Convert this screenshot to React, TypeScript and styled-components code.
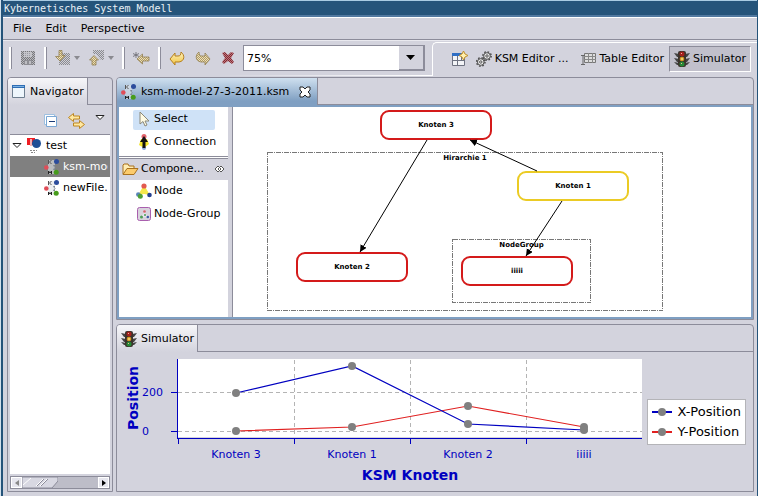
import React from "react";
import styled, { createGlobalStyle, css } from "styled-components";

const c = {
  face: "#d3d3dd",
  line: "#8c8c9a",
  frame: "#25547a",
  active: "#7f9fc2",
  axis: "#0000c0",
};

const GlobalStyle = createGlobalStyle`
  * { box-sizing: border-box; }
  body { margin: 0; background: #d3e1ec; font: 11px/14px "DejaVu Sans", sans-serif; color: #000; }
  button, select { font: inherit; color: inherit; }
  button { margin: 0; padding: 0; border: 0; background: none; }
  ul { list-style: none; margin: 0; padding: 0; }
  svg { display: block; flex: none; }
`;

const Window = styled.div`
  display: flex;
  flex-direction: column;
  min-height: 100vh;
  margin-left: 1px;
  background: ${c.face};
  border: solid ${c.frame};
  border-width: 0 1px 0 2px;
`;
const TitleBar = styled.header`
  height: 18px;
  padding-left: 1px;
  background: ${c.frame};
  border-top: 1px solid #a9cbe2;
  border-bottom: 1px solid #fff;
  box-shadow: inset 0 -2px #5279a0;
  color: #e8f0f5;
  font: 10px/16px "DejaVu Sans Mono", monospace;
`;
const MenuBar = styled.nav`
  display: flex;
  gap: 14px;
  height: 22px;
  padding-left: 10px;
  border-bottom: 1px solid ${c.line};
`;
const ToolBar = styled.div`
  display: flex;
  height: 36px;
  border-top: 1px solid #e9e9ef;
`;
const Tools = styled.div`
  flex: 1;
  display: flex;
  align-items: center;
  padding: 0 0 0 6px;
  border-bottom: 1px solid transparent;
  border-image: linear-gradient(90deg, transparent 50%, #fff) 1;
`;
const Separator = styled.span`
  width: 3px;
  height: 22px;
  border-left: 2px solid #fff;
  border-right: 1px solid ${c.line};
`;
const ToolGroup = styled.div<{ $gap?: number }>`
  display: flex;
  align-items: center;
  gap: ${(p) => p.$gap ?? 10}px;
  padding: 0 8px;
`;
const ToolButton = styled.button`
  display: flex;
  align-items: center;
  gap: 3px;
`;
const Combo = styled.div`
  flex: 1;
  display: grid;
  grid-template-columns: 1fr 25px;
  max-width: 184px;
  height: 26px;
  margin-right: 7px;
  border: 1px solid ${c.line};
  background: #fff;
`;
const ComboSelect = styled.select`
  grid-area: 1 / 1 / 2 / 3;
  appearance: none;
  border: 0;
  background: transparent;
  padding: 2px 3px 0;
`;
const ComboArrow = styled.span`
  grid-area: 1 / 2;
  display: grid;
  place-items: center;
  background: ${c.face};
  border: 1px solid ${c.line};
  border-width: 0 1px 1px 0;
  pointer-events: none;
`;
const Perspectives = styled.div`
  display: flex;
  align-items: center;
  padding: 0 6px 2px 19px;
  margin-top: 1px;
  border-top: 1px solid #fff;
  border-left: 1px solid #fff;
  border-top-left-radius: 5px;
`;
const PerspectiveButton = styled.button<{ $on?: boolean }>`
  display: flex;
  align-items: center;
  gap: 3px;
  height: 26px;
  padding: 0 4px;
  margin-left: 3px;
  white-space: nowrap;
  border: 1px solid transparent;
  ${(p) =>
    p.$on &&
    css`
      background: #c1c0cb;
      border-color: ${c.line} #fff #fff ${c.line};
      margin-left: 0;
    `}
`;
const Workbench = styled.main`
  flex: 1;
  display: grid;
  grid-template-columns: 106px 1fr;
  gap: 3px;
  padding: 1px 3px 4px 4px;
`;
const Column = styled.div`
  display: grid;
  grid-template-rows: 243fr 168fr;
  gap: 4px;
  min-width: 0;
`;
const Panel = styled.section`
  display: flex;
  flex-direction: column;
  min-width: 0;
  border: 1px solid ${c.line};
  border-radius: 4px 4px 0 0;
  overflow: hidden;
`;
const TabStrip = styled.div`
  display: flex;
  height: 27px;
`;
const Tab = styled.button<{ $active?: boolean }>`
  display: flex;
  align-items: center;
  gap: 4px;
  padding: 0 3px 0 4px;
  border-right: 1px solid ${c.line};
  white-space: nowrap;
  background: ${(p) =>
    p.$active
      ? "linear-gradient(#cfe0ef, #7f9fc2 85%)"
      : "linear-gradient(#f6f6f9, #d3d3dd)"};
`;
const TabTitle = styled.span`
  padding-right: 6px;
`;
const TabClose = styled.span`
  padding-right: 3px;
`;
const StripRest = styled.span`
  flex: 1;
  border-bottom: 1px solid ${c.line};
`;
const ViewBar = styled.div`
  display: flex;
  justify-content: flex-end;
  gap: 10px;
  height: 29px;
  padding: 2px 7px 0 0;
`;
const Tree = styled.ul`
  flex: 1;
  margin: 0 2px;
  background: #fff;
  border-top: 1px solid ${c.line};
`;
const TreeRow = styled.li<{ $level: number; $selected?: boolean }>`
  display: flex;
  align-items: center;
  gap: ${(p) => (p.$level ? 3 : 4)}px;
  height: 21px;
  padding-left: ${(p) => (p.$level ? 34 : 2)}px;
  ${(p) => p.$selected && css`background: #808080; color: #fff;`}
`;
const TreeLabel = styled.span`
  flex: 1;
  min-width: 0;
  margin-right: 2px;
  overflow: hidden;
  white-space: nowrap;
`;
const ScrollBar = styled.div`
  display: flex;
  height: 13px;
  margin: 2px;
  background: #bdbdc8;
  border: 1px solid ${c.line};
`;
const ScrollButton = styled.button`
  display: grid;
  place-items: center;
  width: 11px;
  background: #e6e6ee;
  border: 1px solid #fff;
`;
const ScrollTrack = styled.span`
  flex: 1;
`;
const EditorBody = styled.div`
  flex: 1;
  display: flex;
  padding: 2px;
  background: ${c.active};
`;
const Palette = styled.div`
  width: 109px;
  padding-top: 3px;
  background: #fff;
`;
const Sash = styled.span`
  width: 5px;
  background: ${c.face};
  border-right: 1px solid ${c.line};
`;
const PaletteItem = styled.button<{ $selected?: boolean }>`
  display: flex;
  align-items: center;
  gap: 2px;
  height: 20px;
  margin: 0 0 3px 14px;
  padding: 0 27px 2px 3px;
  border-radius: 2px;
  white-space: nowrap;
  ${(p) => p.$selected && css`background: #cfe2f7;`}
`;
const Drawer = styled.button`
  display: flex;
  align-items: center;
  justify-content: space-between;
  width: 100%;
  height: 24px;
  margin-bottom: 2px;
  padding: 0 3px;
  background: ${c.face};
  border-top: 1px solid ${c.line};
  box-shadow: inset 0 1px #fff, inset 0 2px ${c.line};
`;
const DrawerTitle = styled.span`
  display: flex;
  align-items: center;
  gap: 2px;
`;
const Canvas = styled.div`
  position: relative;
  flex: 1;
  overflow: hidden;
  background: #fff;
  font-size: 7px;
  font-weight: bold;
  line-height: 12px;
`;
const Node = styled.div<{ $x: number; $y: number; $color: string }>`
  position: absolute;
  left: ${(p) => p.$x}px;
  top: ${(p) => p.$y}px;
  display: grid;
  place-items: center;
  width: 112px;
  height: 30px;
  border: 2px solid ${(p) => p.$color};
  border-radius: 9px;
`;
const GroupLabel = styled.div<{ $x: number; $y: number; $w: number }>`
  position: absolute;
  left: ${(p) => p.$x}px;
  top: ${(p) => p.$y}px;
  width: ${(p) => p.$w}px;
  text-align: center;
`;
const Links = styled.svg`
  position: absolute;
  inset: 0;
`;
const ChartArea = styled.div`
  flex: 1;
  display: flex;
  align-items: flex-start;
`;
const Chart = styled.svg`
  flex: 1;
  min-width: 0;
  height: 138px;
  font-size: 11px;
  fill: ${c.axis};
`;
const AxisTitle = styled.text`
  font-size: 14px;
  font-weight: bold;
  text-anchor: middle;
`;
const AxisLabel = styled.text`
  text-anchor: middle;
`;
const Legend = styled.ul`
  margin: 47px 7px 0 5px;
  padding: 2px 4px;
  background: #fff;
  border: 1px solid #b4b4b8;
  font-size: 13px;
`;
const LegendItem = styled.li`
  display: flex;
  align-items: center;
  gap: 5px;
  height: 20px;
  white-space: nowrap;
`;

/* ---------- icons ---------- */

const Icon = ({ children, w = 16, h = 16 }: { children: React.ReactNode; w?: number; h?: number }) => (
  <svg width={w} height={h} viewBox={`0 0 ${w} ${h}`} aria-hidden="true">{children}</svg>
);

const Dither = ({ id, color, base }: { id: string; color: string; base: string }) => (
  <pattern id={id} width="2" height="2" patternUnits="userSpaceOnUse">
    <rect width="2" height="2" fill={base} />
    <path d="M0 0h1v1h-1zM1 1h1v1h-1z" fill={color} shapeRendering="crispEdges" />
  </pattern>
);

const SaveIcon = () => (
  <Icon>
    <defs><Dither id="dSave" color="#77777c" base="#b9b9be" /></defs>
    <path d="M1 1h14v14H2l-1-1z" fill="url(#dSave)" />
    <path d="M4 2h8v5H4z" fill="#c4c4ca" />
    <path d="M5 3.500h6M5 5.500h6" stroke="#9c9ca4" strokeDasharray="1 1" />
    <path d="M4 10h8v5H4z" fill="#8e8e94" />
    <path d="M5 11h2v3H5zM9 11h2v3H9z" fill="#bdbdc2" />
  </Icon>
);

const TransferIcon = ({ up }: { up?: boolean }) => (
  <Icon>
    <defs>
      <Dither id="dBox" color="#8a8a90" base="#cfcfd6" />
      <Dither id="dGold" color="#b39c62" base="#eadfbd" />
    </defs>
    <path d={up ? "M4 0h11v10h-3L7 4H4z" : "M7 3h8v12H4v-4z"} fill="url(#dBox)" />
    <path
      d={up ? "M5 5.500l4.500 4.500H7v5H3v-5H.5z" : "M4 .500h3v5h3L5 11 .500 6.500H4z"}
      fill="url(#dGold)" stroke="#8f7c4e" strokeOpacity=".75"
    />
  </Icon>
);

const Caret = () => (
  <Icon w={6} h={4}><path d="M0 0h6L3 4z" fill="#8a8a90" /></Icon>
);

const BackIcon = () => (
  <Icon w={17}>
    <path d="M3 2v6M0 3.500l6 3M6 3.500l-6 3" stroke="#66666e" strokeOpacity=".8" />
    <path d="M9.500 4v3h6.500v4H9.500v3L4 9z" fill="url(#dGold)" stroke="#8f7c4e" strokeOpacity=".75" />
  </Icon>
);

const UNDO = "M6 3v3h3c2 0 3-1 3-4 4 3 4 9-2 10H6v3L1 9z";
const UndoIcon = () => (
  <Icon>
    <defs>
      <linearGradient id="gold" x2="0" y2="1"><stop stopColor="#fff3bd" /><stop offset="1" stopColor="#f0c23e" /></linearGradient>
    </defs>
    <path d={UNDO} fill="url(#gold)" stroke="#b57f1d" strokeLinejoin="round" />
  </Icon>
);
const RedoIcon = () => (
  <Icon>
    <path d={UNDO} transform="matrix(-1 0 0 1 16 0)" fill="url(#dGold)" stroke="#8f7c4e" strokeOpacity=".75" />
  </Icon>
);
const DeleteIcon = () => (
  <Icon w={14} h={14}>
    <defs><Dither id="dRed" color="#7e2b34" base="#c0747a" /></defs>
    <path d="M1 2l3-1 3 3 3-3 3 1-3 5 3 4-2 2-4-3-4 3-2-2 3-4z" fill="url(#dRed)" />
  </Icon>
);
const NewPerspectiveIcon = () => (
  <Icon>
    <path d="M.5 2.500h12v12H.500z" fill="#f3f4f7" stroke="#6e7280" />
    <path d="M0 2h9v3H0z" fill="#2f6ec4" />
    <path d="M0 9.500h12M5.500 5v10M9.500 5v4" stroke="#6e7280" fill="none" />
    <path d="M11.500 0l1.500 3 3 1.500-3 1.500-1.500 3-1.500-3-3-1.500 3-1.500z" fill="#fff0b0" stroke="#c0902a" />
  </Icon>
);
const Gear = ({ x, y }: { x: number; y: number }) => (
  <g transform={`translate(${x} ${y})`} fill="none" stroke="#4c4c4c">
    <circle r="3.300" fill="#f0f0f0" />
    <circle r="4.200" strokeWidth="1.400" strokeDasharray="1.650 1.650" />
    <circle r="1.200" fill="#fff" />
  </g>
);
const GearsIcon = () => (
  <Icon><Gear x={4.8} y={11} /><Gear x={11} y={5} /></Icon>
);
const TableIcon = () => (
  <Icon w={15}>
    <path d="M3.500 2.500h11v9h-11z" fill="#ddd" stroke="#777" />
    <path d="M3 5.500h12M3 8.500h12M7.500 2v10M11.500 2v10" stroke="#888" />
    <path d="M0 4.500h4M0 13.500h4M2 5v8" stroke="#666" />
  </Icon>
);
const TrafficIcon = () => (
  <Icon>
    <path d="M0 2l5 1v3H3zM0 7l5 1v3H3zM0 11l5 1v2H3zM16 2l-5 1v3h2zM16 7l-5 1v3h2zM16 11l-5 1v2h2z" fill="#444" />
    <rect x="4" y="0" width="8" height="16" rx="2" fill="#3c332c" />
    <circle cx="8" cy="3" r="2.500" fill="#a5201c" />
    <circle cx="8" cy="8" r="2.300" fill="#d59a25" />
    <circle cx="8" cy="13" r="2.500" fill="#258a35" />
    <circle cx="8" cy="8" r="1" fill="#f6dc80" />
    <path d="M7 2h1v1H7zM7 12h1v1H7z" fill="#f0b0a0" />
  </Icon>
);
const NavigatorIcon = () => (
  <Icon w={14} h={13}>
    <path d="M.5.500h12v12H.500z" fill="#eef6fc" stroke="#6f7f90" />
    <path d="M0 0h13v3H0z" fill="#2e6db4" />
    <path d="M1 1h11v1H1z" fill="#7db2e2" />
  </Icon>
);
const ModelIcon = () => (
  <Icon>
    <path d="M4 1h7v14H4z" fill="#dfe3e8" fillOpacity=".6" />
    <path d="M4.500 1v4M7.500 1l-2 2 2 2" stroke="#555" fill="none" />
    <path d="M11 6.500H9.500L11 8.500 9.500 10.500H11" stroke="#7d8794" fill="none" />
    <path d="M4.500 15v-3l1.500 2 1.500-2v3" stroke="#222" fill="none" />
    <circle cx="12.500" cy="2.500" r="2.500" fill="#2c4c9c" />
    <circle cx="2.300" cy="8.500" r="2.300" fill="#e04d58" />
    <circle cx="12.200" cy="13.200" r="2.500" fill="#479c1c" />
  </Icon>
);
const CloseIcon = () => (
  <Icon w={12} h={12}>
    <path d="M1 1h3l2 2 2-2h3v3L9 6l2 2v3H8L6 9l-2 2H1V8l2-2-2-2z" fill="#fff" stroke="#222" />
  </Icon>
);
const CollapseIcon = () => (
  <Icon w={14} h={14}>
    <path d="M.5.500h10v10H.500z" fill="#fff" stroke="#9fc0e0" />
    <path d="M2.500 2.500h10v10h-10z" fill="#fff" stroke="#7aa7d4" />
    <path d="M5 7.500h6" stroke="#1b3c78" />
  </Icon>
);
const LinkIcon = () => (
  <Icon w={17}>
    <path d="M5.500.500L.500 4.500l5 4v-2.500h6V3h-6z" fill="#ffe8a0" stroke="#bd8621" />
    <path d="M11.500 7.500l5 4-5 4V13h-6v-3h6z" fill="#ffe8a0" stroke="#bd8621" />
  </Icon>
);
const Chevron = () => (
  <Icon w={10} h={6}><path d="M1 .500h8L5 4.500z" fill="#fff" stroke="#222" /></Icon>
);
const MenuChevron = () => (
  <Icon w={10} h={14}><path d="M1 1.500h8L5 5.500z" fill="#fff" stroke="#222" /></Icon>
);
const ProjectIcon = () => (
  <Icon>
    <path d="M1 0h8v7H1z" fill="#ef1c22" />
    <path d="M4 1h2v7H4z" fill="#f7b0b0" />
    <circle cx="10.500" cy="5.500" r="4.500" fill="#1f4f96" />
    <path d="M4 12.500h7M5 14.500h4" stroke="#888" fill="none" strokeDasharray="2 1" />
  </Icon>
);
const CursorIcon = () => (
  <Icon>
    <path d="M4 1v12l3-2.500L9 15l2-1-2-4h4z" fill="#fffbe4" stroke="#8b8878" />
  </Icon>
);
const ConnectionIcon = () => (
  <Icon>
    <circle cx="8" cy="2.500" r="2.500" fill="#e2636b" />
    <path d="M5 5h6l2 5-5 4-5-3z" fill="#f4e52c" />
    <circle cx="8" cy="14" r="2" fill="#8da4d8" />
    <path d="M8 2l4 6H9.500v6h-3V8H4z" fill="#111" />
  </Icon>
);
const FolderIcon = () => (
  <Icon w={17}>
    <path d="M1 13V4l1-1h4l1 2h5v3" fill="#ffedb4" stroke="#a9711d" />
    <path d="M1 13.500l4-6h11l-4 6z" fill="#fccb6c" stroke="#a9711d" />
  </Icon>
);
const PinIcon = () => (
  <Icon w={11} h={8}>
    <path d="M4 1L1 4l3 3 1.500-1.500L7 7l3-3-3-3-1.500 1.500zM5.500 2.500L4 4l1.500 1.500L7 4z" fill="#fff" stroke="#555" />
  </Icon>
);
const NodeIcon = () => (
  <Icon>
    <path d="M8 2l6 10-6-1-6 1z" fill="#f5e94c" />
    <circle cx="8" cy="3" r="2.600" fill="#e25a50" />
    <circle cx="2.300" cy="11.500" r="2.300" fill="#5b86b9" />
    <circle cx="4.300" cy="13.300" r="2.500" fill="#4d9f35" />
    <circle cx="13.500" cy="12" r="2.300" fill="#24418f" />
  </Icon>
);
const NodeGroupIcon = () => (
  <Icon>
    <rect x="1.500" y="1.500" width="13" height="13" rx="2" fill="#d8d3dc" stroke="#a95fae" />
    <path d="M8.500 6l3.500 5H5z" fill="#e7e3ee" />
    <circle cx="8.500" cy="5.500" r="1.300" fill="#d9606a" />
    <circle cx="5.500" cy="11" r="1.500" fill="#4d9f55" />
    <circle cx="9" cy="9" r="1" fill="#4d9f55" />
    <circle cx="11.800" cy="11" r="1.300" fill="#3c5ba5" />
  </Icon>
);

/* ---------- data ---------- */

const nodes = [
  { name: "Knoten 3", x: 147, y: 3, color: "#d41a1a" },
  { name: "Knoten 1", x: 284, y: 64, color: "#ebcb24" },
  { name: "Knoten 2", x: 63, y: 145, color: "#d41a1a" },
  { name: "iiiii", x: 228, y: 149, color: "#d41a1a" },
];
const groups = [
  { name: "Hirarchie 1", x: 34, y: 45, w: 396, h: 158 },
  { name: "NodeGroup", x: 219, y: 132, w: 139, h: 63 },
];
const links = [
  [194, 33, 127, 145],
  [304, 64, 237, 33],
  [329, 94, 293, 149],
];
const categories = ["Knoten 3", "Knoten 1", "Knoten 2", "iiiii"];
const series = [
  { name: "Y-Position", color: "#e02020", ys: [79, 75, 54, 75] },
  { name: "X-Position", color: "#0000c0", ys: [41, 14, 72, 78] },
];
const px = (i: number) => 119 + i * 116;

const PositionChart = () => (
  <Chart viewBox="0 0 525 138" preserveAspectRatio="xMinYMin meet" role="img" aria-label="Position by KSM Knoten">
    <rect x="61" y="7" width="464" height="78" fill="#fff" />
    <g stroke="#b4b4b4" strokeDasharray="4 3" shapeRendering="crispEdges">
      <path d="M61 40.500H525M61 79.500H525M177.500 8V85M293.500 8V85M409.500 8V85" />
    </g>
    <g fill={c.axis} shapeRendering="crispEdges">
      <path d="M60 7h1v80h-1zM60 86h465v1H60zM54 40h6v1h-6zM54 79h6v1h-6zM61 87h1v5h-1zM177 87h1v5h-1zM293 87h1v5h-1zM409 87h1v5h-1z" />
    </g>
    {series.map((s) => (
      <g key={s.name}>
        <polyline points={s.ys.map((y, i) => `${px(i)},${y}`).join(" ")} fill="none" stroke={s.color} strokeWidth="1.200" />
        {s.ys.map((y, i) => <circle key={i} cx={px(i)} cy={y} r="4" fill="#808080" />)}
      </g>
    ))}
    <text x="25" y="44">200</text>
    <text x="25" y="83">0</text>
    {categories.map((n, i) => <AxisLabel key={n} x={px(i)} y="106">{n}</AxisLabel>)}
    <AxisTitle x="293" y="128">KSM Knoten</AxisTitle>
    <AxisTitle transform="translate(21 46) rotate(-90)">Position</AxisTitle>
  </Chart>
);

export default function App() {
  return (
    <Window>
      <GlobalStyle />
      <TitleBar>Kybernetisches System Modell</TitleBar>
      <MenuBar>
        <button>File</button>
        <button>Edit</button>
        <button>Perspective</button>
      </MenuBar>
      <ToolBar>
        <Tools>
          <Separator />
          <ToolGroup><ToolButton aria-label="Save" disabled><SaveIcon /></ToolButton></ToolGroup>
          <Separator />
          <ToolGroup $gap={9}>
            <ToolButton aria-label="Import" disabled><TransferIcon /><Caret /></ToolButton>
            <ToolButton aria-label="Export" disabled><TransferIcon up /><Caret /></ToolButton>
          </ToolGroup>
          <Separator />
          <ToolGroup><ToolButton aria-label="Last edit location" disabled><BackIcon /></ToolButton></ToolGroup>
          <Separator />
          <ToolGroup>
            <ToolButton aria-label="Undo"><UndoIcon /></ToolButton>
            <ToolButton aria-label="Redo" disabled><RedoIcon /></ToolButton>
            <ToolButton aria-label="Delete" disabled><DeleteIcon /></ToolButton>
          </ToolGroup>
          <Combo>
            <ComboSelect aria-label="Zoom" defaultValue="75%">
              <option>50%</option>
              <option>75%</option>
              <option>100%</option>
            </ComboSelect>
            <ComboArrow><Icon w={9} h={5}><path d="M0 0h9L4.500 5z" /></Icon></ComboArrow>
          </Combo>
        </Tools>
        <Perspectives>
          <ToolButton aria-label="Open perspective"><NewPerspectiveIcon /></ToolButton>
          <PerspectiveButton><GearsIcon />KSM Editor ...</PerspectiveButton>
          <PerspectiveButton><TableIcon />Table Editor</PerspectiveButton>
          <PerspectiveButton $on aria-pressed="true"><TrafficIcon />Simulator</PerspectiveButton>
        </Perspectives>
      </ToolBar>
      <Workbench>
        <Panel>
          <TabStrip role="tablist">
            <Tab role="tab" aria-selected="true"><NavigatorIcon />Navigator</Tab>
            <StripRest />
          </TabStrip>
          <ViewBar>
            <button aria-label="Collapse all"><CollapseIcon /></button>
            <button aria-label="Link with editor"><LinkIcon /></button>
            <button aria-label="View menu"><MenuChevron /></button>
          </ViewBar>
          <Tree>
            <TreeRow $level={0}><Chevron /><ProjectIcon /><TreeLabel>test</TreeLabel></TreeRow>
            <TreeRow $level={1} $selected><ModelIcon /><TreeLabel>ksm-model-27-3-2011.ksm</TreeLabel></TreeRow>
            <TreeRow $level={1}><ModelIcon /><TreeLabel>newFile.ksm</TreeLabel></TreeRow>
          </Tree>
          <ScrollBar>
            <ScrollButton aria-label="Scroll left"><Icon w={4} h={6}><path d="M4 0v6L0 3z" fill="#888" /></Icon></ScrollButton>
            <Icon w={36} h={11}>
              <path d="M0 0h36v4l-6 7H0z" fill="#d8d8e2" stroke="#8c8c9a" />
              <path d="M1 8l8-7M14 9l7-7M18 9l7-7" stroke="#fff" />
              <path d="M15 9l7-7M19 9l7-7" stroke="#8c8c9a" />
            </Icon>
            <ScrollTrack />
            <ScrollButton aria-label="Scroll right"><Icon w={4} h={6}><path d="M0 0v6l4-3z" /></Icon></ScrollButton>
          </ScrollBar>
        </Panel>
        <Column>
          <Panel>
            <TabStrip role="tablist">
              <Tab $active role="tab" aria-selected="true">
                <ModelIcon />
                <TabTitle>ksm-model-27-3-2011.ksm</TabTitle>
                <TabClose><CloseIcon /></TabClose>
              </Tab>
              <StripRest />
            </TabStrip>
            <EditorBody>
              <Palette>
                <PaletteItem $selected><CursorIcon />Select</PaletteItem>
                <PaletteItem><ConnectionIcon />Connection</PaletteItem>
                <Drawer><DrawerTitle><FolderIcon />Compone...</DrawerTitle><PinIcon /></Drawer>
                <PaletteItem><NodeIcon />Node</PaletteItem>
                <PaletteItem><NodeGroupIcon />Node-Group</PaletteItem>
              </Palette>
              <Sash />
              <Canvas>
                {nodes.map((n) => <Node key={n.name} $x={n.x} $y={n.y} $color={n.color}>{n.name}</Node>)}
                {groups.map((g) => <GroupLabel key={g.name} $x={g.x} $y={g.y} $w={g.w}>{g.name}</GroupLabel>)}
                <Links width="100%" height="100%" aria-hidden="true">
                  <defs>
                    <marker id="head" markerUnits="userSpaceOnUse" markerWidth="8" markerHeight="8" refX="7" refY="3.500" orient="auto">
                      <path d="M0 0l7 3.500L0 7z" />
                    </marker>
                  </defs>
                  {groups.map((g) => (
                    <rect key={g.name} x={g.x + 0.5} y={g.y + 0.5} width={g.w - 1} height={g.h} fill="none" stroke="#777" strokeDasharray="5 1 1 1" shapeRendering="crispEdges" />
                  ))}
                  {links.map(([x1, y1, x2, y2]) => (
                    <line key={x1} x1={x1} y1={y1} x2={x2} y2={y2} stroke="#000" markerEnd="url(#head)" />
                  ))}
                </Links>
              </Canvas>
            </EditorBody>
          </Panel>
          <Panel>
            <TabStrip role="tablist">
              <Tab role="tab" aria-selected="true"><TrafficIcon />Simulator</Tab>
              <StripRest />
            </TabStrip>
            <ChartArea>
              <PositionChart />
              <Legend>
                {[...series].reverse().map((s) => (
                  <LegendItem key={s.name}>
                    <Icon w={20} h={8}>
                      <path d="M0 4h20" stroke={s.color} strokeWidth="2" />
                      <circle cx="10" cy="4" r="4" fill="#808080" />
                    </Icon>
                    {s.name}
                  </LegendItem>
                ))}
              </Legend>
            </ChartArea>
          </Panel>
        </Column>
      </Workbench>
    </Window>
  );
}
